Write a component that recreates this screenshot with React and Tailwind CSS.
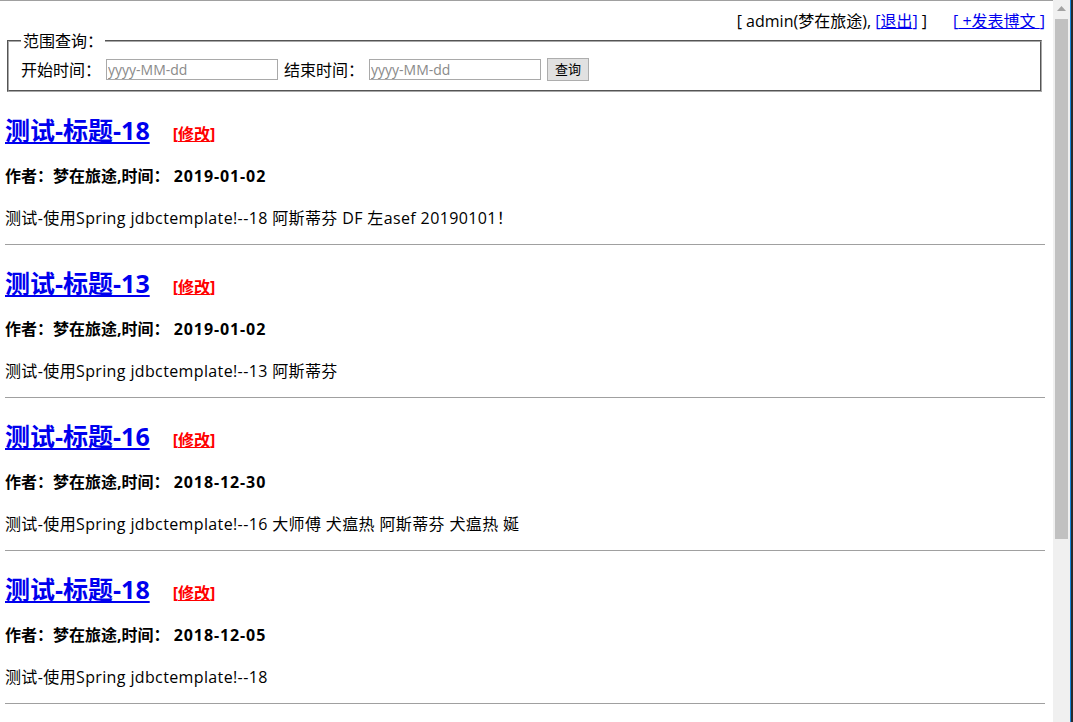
import React from 'react';

const posts = [
  { title: '测试-标题-18', date: '2019-01-02', body: '测试-使用Spring jdbctemplate!--18 阿斯蒂芬 DF 左asef 20190101！' },
  { title: '测试-标题-13', date: '2019-01-02', body: '测试-使用Spring jdbctemplate!--13 阿斯蒂芬' },
  { title: '测试-标题-16', date: '2018-12-30', body: '测试-使用Spring jdbctemplate!--16 大师傅 犬瘟热 阿斯蒂芬 犬瘟热 娫' },
  { title: '测试-标题-18', date: '2018-12-05', body: '测试-使用Spring jdbctemplate!--18' },
];

function Post({ post }) {
  return (
    <div>
      <div className="mt-[22px] h-[32px] flex items-baseline">
        <a href="#" className="text-[25px] leading-[32px] font-bold text-[#0000ee] underline">{post.title}</a>
        <a href="#" className="ml-[23px] text-[16px] font-bold text-[#ff0000]">
          [<span className="underline">修改</span>]
        </a>
      </div>
      <p className="mt-[19px] text-[16px] leading-[22px] font-bold">
        作者：梦在旅途,时间： <span className="tracking-[0.9px]">{post.date}</span>
      </p>
      <p className="mt-[20px] text-[16px] leading-[22px] tracking-[0.37px]">{post.body}</p>
      <div className="mt-[15px] h-px bg-[#a0a0a0]" />
    </div>
  );
}

export default function App() {
  return (
    <div className="flex h-[722px] w-[1073px] overflow-hidden bg-white text-black font-['Open_Sans','Noto_Sans_CJK_SC',sans-serif]">
      <div className="w-[1053px] h-full flex flex-col">
        <div className="h-px bg-[#a0a0a0]" />
        <div className="pl-[5px] pr-[8px]">
          <div className="h-[30px] pt-[10px] text-right text-[16px] leading-[20px]">
            [ admin(梦在旅途), <a href="#" className="text-[#0000ee]">[<span className="underline">退出</span>]</a> ]
            <span className="inline-block w-[26px]" />
            <a href="#" className="text-[#0000ee]">[<span className="underline"> +发表博文 </span>]</a>
          </div>

          <fieldset className="ml-[2px] mr-[3px] border-2 [border-style:groove] border-[#a8a8a8] px-[12px] pb-[9px]">
            <legend className="px-[2px] text-[16px] leading-[20px]">范围查询：</legend>
            <div className="mt-[7px] h-[23px] flex items-center text-[16px]">
              <span>开始时间：</span>
              <input className="ml-[5px] w-[172px] h-[21px] border border-[#a9a9a9] px-[1px] text-[14px] placeholder:text-[#8a8a8a] outline-none" placeholder="yyyy-MM-dd" />
              <span className="ml-[6px]">结束时间：</span>
              <input className="ml-[5px] w-[172px] h-[21px] border border-[#a9a9a9] px-[1px] text-[14px] placeholder:text-[#8a8a8a] outline-none" placeholder="yyyy-MM-dd" />
              <button className="ml-[6px] w-[42px] h-[23px] border border-[#adadad] bg-[#e1e1e1] text-[13px] leading-none">查询</button>
            </div>
          </fieldset>

          {posts.map((p, i) => (
            <Post key={i} post={p} />
          ))}
        </div>
      </div>

      <div className="w-[17px] h-full bg-[#f0f0f0] flex flex-col">
        <div className="h-[17px] flex items-center justify-center">
          <svg width="9" height="5" viewBox="0 0 9 5">
            <path d="M0 5 L4.5 0 L9 5 Z" fill="#a3a3a3" />
          </svg>
        </div>
        <div className="mt-[2px] mx-[2px] h-[520px] bg-[#c1c1c1]" />
      </div>
      <div className="w-px h-full bg-[#1883d7]" />
      <div className="w-[2px] h-full bg-[#2b2b2b]" />
    </div>
  );
}
